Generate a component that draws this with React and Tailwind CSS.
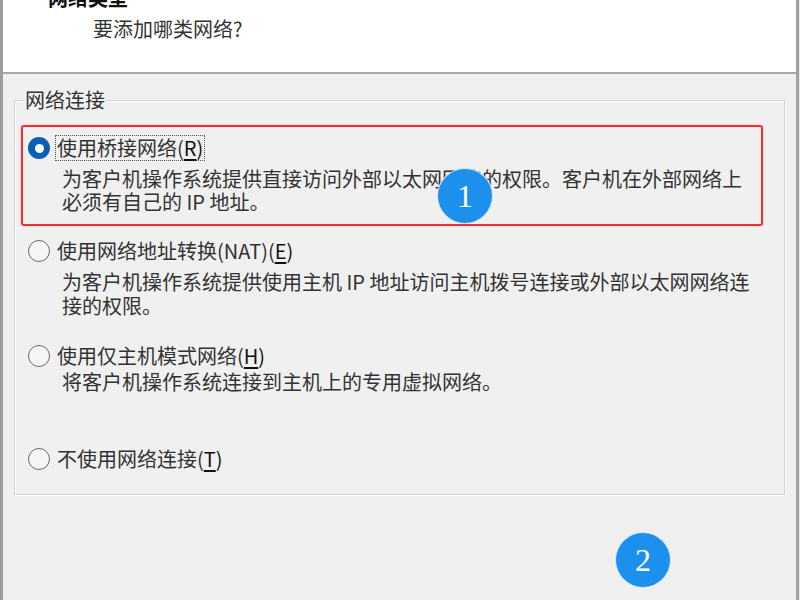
import React from "react";

function Radio({ checked }) {
  if (checked) {
    return (
      <span className="flex h-[22px] w-[22px] shrink-0 items-center justify-center rounded-full bg-[#0a5fb4]">
        <span className="h-[9px] w-[9px] rounded-full bg-white" />
      </span>
    );
  }
  return (
    <span className="h-[22px] w-[22px] shrink-0 rounded-full border-[1.5px] border-[#6a6a6a] bg-[#f6f6f6]" />
  );
}

function Label({ text, mn, focus }) {
  return (
    <span
      className={
        "ml-[5px] border px-[1px] leading-[24px] text-[#333] whitespace-nowrap " +
        (focus ? "border-dotted border-[#555]" : "border-transparent")
      }
    >
      {text}(<span className="underline underline-offset-[3px] text-[#111]">{mn}</span>
      <span className="text-[#111]">)</span>
    </span>
  );
}

export default function App() {
  return (
    <div
      className="relative flex h-[600px] w-[800px] overflow-hidden bg-[#f0f0f0] text-[20px]"
      style={{ fontFamily: '"Noto Sans CJK SC", "Noto Sans", sans-serif' }}
    >
      <div className="w-[3px] shrink-0 bg-[#9c9c9c]" />
      <div className="flex w-[793px] shrink-0 flex-col">
        <div className="h-[74px] shrink-0 border-b-2 border-[#a9a9a9] bg-white">
          <div className="mt-[-14px] pl-[45px] font-bold leading-[24px] text-[#111]">
            网络类型
          </div>
          <div className="mt-[7px] pl-[90px] leading-[24px] text-[#333]">
            要添加哪类网络?
          </div>
        </div>
        <div className="px-[11px]">
          <fieldset className="mt-[14px] border border-[#d2d2d2] pb-[22px] shadow-[1px_1px_0_#ffffff,inset_1px_1px_0_#ffffff]">
            <legend className="ml-[9px] px-[1px] leading-[24px] text-[#333]">
              网络连接
            </legend>

            {/* Row 1 - selected, inside red box */}
            <div className="ml-[6px] mr-[21px] mt-[13px] h-[101px] rounded-[3px] border-[2.5px] border-[#e2323a] pl-[5px] pt-[8px] shadow-[0_0_2px_#f4a0a0]">
              <div className="flex items-center">
                <Radio checked />
                <Label text="使用桥接网络" mn="R" focus />
              </div>
              <div className="ml-[34px] mt-[6px] whitespace-nowrap leading-[23px] text-[#333]">
                为客户机操作系统提供直接访问外部以太网网络的权限。客户机在外部网络上
                <br />
                必须有自己的 IP 地址。
              </div>
            </div>

            {/* Row 2 */}
            <div className="ml-[13px] mt-[12px]">
              <div className="flex items-center">
                <Radio />
                <Label text="使用网络地址转换(NAT)" mn="E" />
              </div>
              <div className="ml-[34px] mt-[6px] whitespace-nowrap leading-[24px] text-[#333]">
                为客户机操作系统提供使用主机 IP 地址访问主机拨号连接或外部以太网网络连
                <br />
                接的权限。
              </div>
            </div>

            {/* Row 3 */}
            <div className="ml-[13px] mt-[25px]">
              <div className="flex items-center">
                <Radio />
                <Label text="使用仅主机模式网络" mn="H" />
              </div>
              <div className="ml-[34px] whitespace-nowrap leading-[25px] text-[#333]">
                将客户机操作系统连接到主机上的专用虚拟网络。
              </div>
            </div>

            {/* Row 4 */}
            <div className="ml-[13px] mt-[52px]">
              <div className="flex items-center">
                <Radio />
                <Label text="不使用网络连接" mn="T" />
              </div>
            </div>
          </fieldset>
        </div>
      </div>
      <div className="w-[3px] shrink-0 bg-[#a0a0a0]" />
      <div className="w-[1px] shrink-0 bg-[#e8e8e8]" />

      {/* Badges */}
      <div
        className="absolute left-[438px] top-[169px] flex h-[54px] w-[54px] items-center justify-center rounded-full bg-[#1d8fec] text-[32px] leading-none text-white shadow-[0_0_0_1px_#cfe6fb]"
        style={{ fontFamily: '"Liberation Serif", serif' }}
      >
        1
      </div>
      <div
        className="absolute left-[616px] top-[533px] flex h-[54px] w-[54px] items-center justify-center rounded-full bg-[#1d8fec] text-[32px] leading-none text-white shadow-[0_0_0_1px_#cfe6fb]"
        style={{ fontFamily: '"Liberation Serif", serif' }}
      >
        2
      </div>
    </div>
  );
}
